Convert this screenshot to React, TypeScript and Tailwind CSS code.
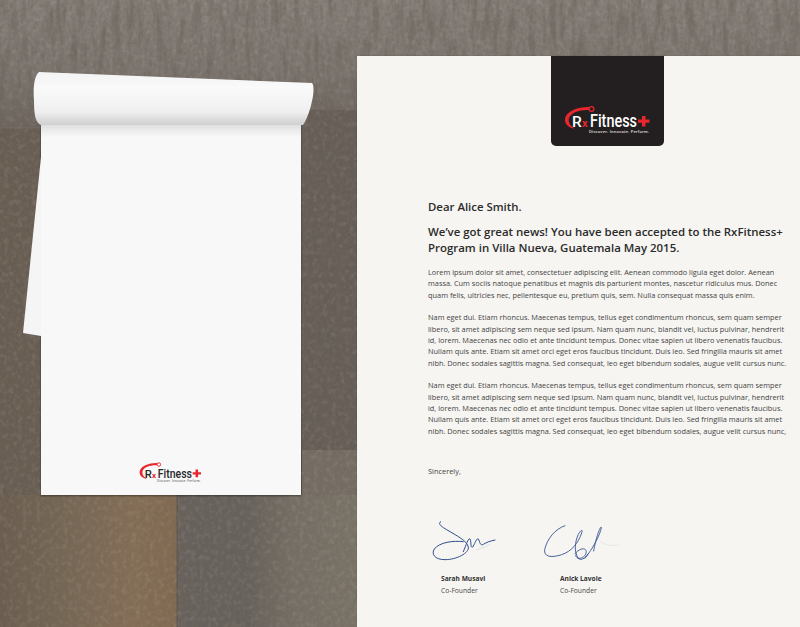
import type { ReactNode } from "react";

const P2 = [
  "Nam eget dui. Etiam rhoncus. Maecenas tempus, tellus eget condimentum rhoncus, sem quam semper",
  "libero, sit amet adipiscing sem neque sed ipsum. Nam quam nunc, blandit vel, luctus pulvinar, hendrerit",
  "id, lorem. Maecenas nec odio et ante tincidunt tempus. Donec vitae sapien ut libero venenatis faucibus.",
  "Nullam quis ante. Etiam sit amet orci eget eros faucibus tincidunt. Duis leo. Sed fringilla mauris sit amet",
];
const P1 = [
  "Lorem ipsum dolor sit amet, consectetuer adipiscing elit. Aenean commodo ligula eget dolor. Aenean",
  "massa. Cum sociis natoque penatibus et magnis dis parturient montes, nascetur ridiculus mus. Donec",
  "quam felis, ultricies nec, pellentesque eu, pretium quis, sem. Nulla consequat massa quis enim.",
];

function Wood() {
  return (
    <svg className="absolute inset-0" width="800" height="627" viewBox="0 0 800 627">
      <defs>
        <filter id="grain" x="0" y="0" width="100%" height="100%">
          <feTurbulence type="fractalNoise" baseFrequency="0.14 0.025" numOctaves="4" seed="7" />
          <feColorMatrix values="0 0 0 0 0.14  0 0 0 0 0.12  0 0 0 0 0.1  3.4 0 0 0 -1.55" />
        </filter>
        <filter id="speck" x="0" y="0" width="100%" height="100%">
          <feTurbulence type="fractalNoise" baseFrequency="0.3 0.24" numOctaves="3" seed="3" />
          <feColorMatrix values="0 0 0 0 0.17  0 0 0 0 0.14  0 0 0 0 0.1  3 0 0 0 -1.3" />
        </filter>
        <filter id="light" x="0" y="0" width="100%" height="100%">
          <feTurbulence type="fractalNoise" baseFrequency="0.22 0.18" numOctaves="3" seed="11" />
          <feColorMatrix values="0 0 0 0 0.72  0 0 0 0 0.68  0 0 0 0 0.62  3 0 0 0 -1.4" />
        </filter>
        <linearGradient id="top" x1="0" y1="0" x2="0" y2="1">
          <stop offset="0" stopColor="#857e79" />
          <stop offset="0.55" stopColor="#7c7570" />
          <stop offset="1" stopColor="#6c645e" />
        </linearGradient>
        <linearGradient id="lowLeft" x1="0" y1="0" x2="1" y2="0">
          <stop offset="0" stopColor="#6a5d50" />
          <stop offset="0.35" stopColor="#756655" />
          <stop offset="0.75" stopColor="#856e56" />
          <stop offset="1" stopColor="#826a51" />
        </linearGradient>
        <linearGradient id="lowRight" x1="0" y1="0" x2="1" y2="0">
          <stop offset="0" stopColor="#66615c" />
          <stop offset="0.4" stopColor="#66615c" />
          <stop offset="0.65" stopColor="#766f66" />
          <stop offset="1" stopColor="#7a7368" />
        </linearGradient>
      </defs>
      <rect x="0" y="0" width="800" height="627" fill="#62594f" />
      <rect x="0" y="0" width="800" height="128" fill="url(#top)" />
      <rect x="300" y="110" width="57" height="340" fill="#655d57" />
      <rect x="0" y="128" width="45" height="372" fill="#675d52" />
      <rect x="302" y="450" width="55" height="50" fill="#756d64" />
      <rect x="0" y="495" width="177" height="132" fill="url(#lowLeft)" />
      <rect x="177" y="495" width="180" height="132" fill="url(#lowRight)" />
      <rect x="0" y="0" width="800" height="627" filter="url(#speck)" opacity="0.4" />
      <rect x="0" y="0" width="800" height="627" filter="url(#light)" opacity="0.1" />
      <rect x="0" y="0" width="800" height="128" filter="url(#grain)" opacity="0.5" />
      <rect x="300" y="128" width="57" height="322" filter="url(#grain)" opacity="0.5" />
      <line x1="0" y1="128" x2="42" y2="128" stroke="#8a8279" strokeOpacity="0.3" />
      <line x1="177" y1="495" x2="177" y2="627" stroke="#4a443f" strokeOpacity="0.5" />
    </svg>
  );
}

function Logo({ dark, width }: { dark?: boolean; width: number }) {
  const ink = dark ? "#ffffff" : "#26272b";
  return (
    <svg width={width} height={(width * 36) / 95} viewBox="0 0 95 36" className="block">
      <path d="M13 28.5 C7 27 3.5 22 5.5 17 C8 10.5 19 6.5 29.5 7 L29 10 C20 9.5 11 12.5 9 18 C8 22 10 26 14.5 28 Z" fill="#e8262d" />
      <circle cx="31.5" cy="9" r="2.4" fill="none" stroke="#e8262d" strokeWidth="1.3" />
      <text x="12" y="27" fontFamily="Roboto, sans-serif" fontSize="15.5" fontWeight="500" fill={ink}>R</text>
      <text x="22" y="27" fontFamily="Roboto, sans-serif" fontSize="11" fontWeight="700" fill="#e8262d">x</text>
      <text x="30" y="27" fontFamily="Roboto, sans-serif" fontSize="18" fontWeight="500" fill={ink} textLength="47" lengthAdjust="spacingAndGlyphs">Fitness</text>
      <path d="M82 16 H85.5 V19.6 H89.5 V22.8 H85.5 V26.5 H82 V22.8 H78 V19.6 H82 Z" fill="#e8262d" />
      <text x="29" y="32.5" fontFamily="'Open Sans', sans-serif" fontSize="3.9" fontWeight="600" fill={dark ? "#e6e6e6" : "#6b6b6b"} textLength="60">Discover. Innovate. Perform.</text>
    </svg>
  );
}

function SignatureOne() {
  return (
    <svg width="70" height="48" viewBox="0 0 210 144" className="block" fill="none" stroke="#2f4f8c" strokeLinecap="round">
      <path strokeWidth="3" d="M32 8 C24 13 29 20 50 32 C80 50 112 66 115 84 C118 102 80 122 45 122 C15 122 3 106 13 90 C28 70 70 64 100 68" />
      <path strokeWidth="3" d="M100 98 C110 74 115 56 120 60 C125 68 120 88 128 84 C136 72 140 56 145 60 C150 68 150 82 160 76 C170 70 180 66 195 63" />
      <path strokeWidth="1" strokeOpacity="0.35" d="M140 92 C155 88 170 82 180 76" />
    </svg>
  );
}

function SignatureTwo() {
  return (
    <svg width="82" height="44" viewBox="0 0 246 132" className="block" fill="none" stroke="#2f4f8c" strokeLinecap="round">
      <path strokeWidth="2.6" d="M66 8 C36 18 12 48 5 80 C2 100 22 106 56 95 C86 85 106 60 116 30 C120 18 114 20 106 34 C96 56 92 86 106 106 C114 114 126 106 134 94" />
      <path strokeWidth="2.6" d="M96 92 C114 70 136 74 128 94 C118 110 98 110 98 96" />
      <path strokeWidth="2.6" d="M126 106 C150 76 172 34 175 14 C175 4 160 36 152 84" />
      <path strokeWidth="1" strokeOpacity="0.28" d="M172 56 C186 66 206 70 228 66" />
    </svg>
  );
}

function Notepad() {
  return (
    <div className="relative ml-[41px] mt-[125px] w-[260px] h-[370px] bg-[#f8f8f8] shadow-[0_1px_2px_rgba(0,0,0,0.45)] flex flex-col items-center justify-end pb-[11px]">
      <svg className="absolute left-[-19px] top-0" width="20" height="212" viewBox="0 0 20 212">
        <polygon points="19,32 1,208 19,211" fill="#f5f5f6" />
      </svg>
      <svg className="absolute left-[-8px] top-[-54px]" width="282" height="84" viewBox="0 0 282 84">
        <defs>
          <linearGradient id="roll" x1="0" y1="0" x2="0" y2="1">
            <stop offset="0" stopColor="#f3f3f3" />
            <stop offset="0.3" stopColor="#fafafa" />
            <stop offset="0.75" stopColor="#efefef" />
            <stop offset="1" stopColor="#cfcfcf" />
          </linearGradient>
          <linearGradient id="rollShadow" x1="0" y1="0" x2="0" y2="1">
            <stop offset="0" stopColor="#000" stopOpacity="0.1" />
            <stop offset="1" stopColor="#000" stopOpacity="0" />
          </linearGradient>
        </defs>
        <rect x="8" y="54" width="260" height="12" fill="url(#rollShadow)" />
        <path d="M6 1 L279 12 C281 14 281 22 279 30 C277 40 273 50 270 54 L8 54 C3 52 1 45 1 30 C0 18 1 5 6 1 Z" fill="url(#roll)" />
      </svg>
      <div className="mr-[2px]">
        <Logo width={69} />
      </div>
    </div>
  );
}

function Lines({ rows }: { rows: string[] }) {
  return (
    <div className="text-[7.38px] leading-[11.4px] text-[#444] whitespace-nowrap">
      {rows.map((r) => (
        <div key={r}>{r}</div>
      ))}
    </div>
  );
}

function Person({ name, sig, offset }: { name: string; sig: ReactNode; offset: string }) {
  return (
    <div className="flex flex-col">
      <div className={offset}>{sig}</div>
      <div className="mt-[9px] text-[6.6px] leading-[12px] font-bold text-[#333]">{name}</div>
      <div className="text-[6.7px] leading-[12px] text-[#4a4a4a]">Co-Founder</div>
    </div>
  );
}

export default function App() {
  return (
    <div className="relative w-[800px] h-[627px] overflow-hidden flex font-['Open_Sans',sans-serif] bg-[#5c534c]">
      <Wood />
      <div className="relative w-[357px] shrink-0">
        <Notepad />
      </div>
      <div className="relative flex-1 mt-[56px] bg-[#f6f5f2] shadow-[0_0_1px_rgba(0,0,0,0.3)]">
        <div className="ml-[194px] w-[113px] h-[90px] bg-[#231f20] rounded-b-[5px] flex items-center justify-center pt-[34px]">
          <Logo dark width={95} />
        </div>
        <div className="pl-[71px] pt-[52px]">
          <div className="text-[11.4px] leading-[18px] font-semibold text-[#2b2b2b]">Dear Alice Smith.</div>
          <div className="mt-[8px] text-[11.45px] leading-[16px] font-semibold text-[#2b2b2b] whitespace-nowrap">
            <div>We’ve got great news! You have been accepted to the RxFitness+</div>
            <div>Program in Villa Nueva, Guatemala May 2015.</div>
          </div>
          <div className="mt-[11px]">
            <Lines rows={P1} />
          </div>
          <div className="mt-[11px]">
            <Lines rows={[...P2, "nibh. Donec sodales sagittis magna. Sed consequat, leo eget bibendum sodales, augue velit cursus nunc."]} />
          </div>
          <div className="mt-[11px]">
            <Lines rows={[...P2, "nibh. Donec sodales sagittis magna. Sed consequat, leo eget bibendum sodales, augue velit cursus nunc,"]} />
          </div>
          <div className="mt-[28px] text-[7.4px] leading-[12px] text-[#444]">Sincerely,</div>
          <div className="mt-[39px] flex pl-[13px] gap-[60px]">
            <Person name="Sarah Musavi" sig={<SignatureOne />} offset="h-[48px] ml-[-11px] pt-[3px]" />
            <Person name="Anick Lavoie" sig={<SignatureTwo />} offset="h-[48px] ml-[-17px] pt-[7px]" />
          </div>
        </div>
      </div>
    </div>
  );
}
